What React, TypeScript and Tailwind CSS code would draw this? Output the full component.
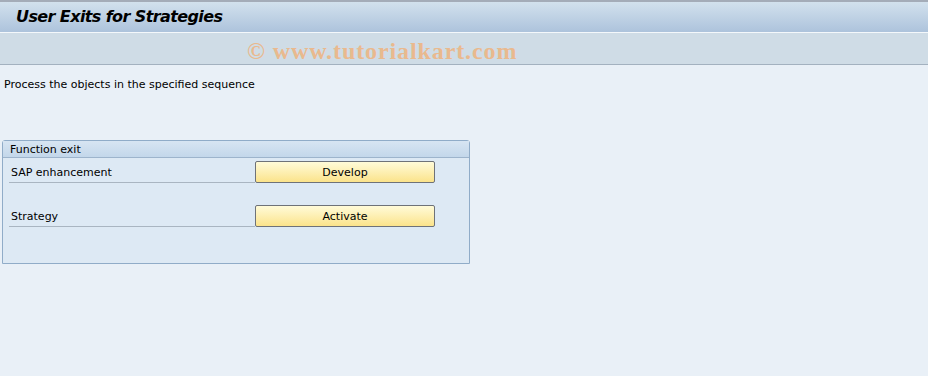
export default function App() {
  const font = { fontFamily: '"DejaVu Sans", sans-serif', fontSize: '11px' };
  return (
    <div className="w-[928px] h-[376px] overflow-hidden bg-[#e9f0f7] flex flex-col" style={font}>
      <div className="h-[2px] bg-[#a4acb8]" />
      <div className="h-[30px] bg-gradient-to-b from-[#d2e1ed] to-[#adc3dc] flex items-center pl-4">
        <span className="font-bold italic text-black tracking-[-0.6px]" style={{ fontSize: '16px' }}>
          User Exits for Strategies
        </span>
      </div>
      <div className="h-px bg-[#f4f8fb]" />
      <div className="h-[32px] bg-[#cfdce6] border-b border-[#a3b1bf] flex items-center pl-[247px] pt-[4px]">
        <span className="text-[24px] font-bold text-[#e9b98e] tracking-[0.9px] leading-none" style={{ fontFamily: '"Liberation Serif", serif' }}>
          © www.tutorialkart.com
        </span>
      </div>
      <div className="px-1 pt-[13px] text-black leading-[14px]">
        Process the objects in the specified sequence
      </div>
      <div className="ml-[2px] mt-[48px] w-[468px] h-[124px] border border-[#90acc8] rounded-t-[3px] bg-[#dde9f4] flex flex-col">
        <div className="h-[17px] bg-gradient-to-b from-[#d7e5f2] to-[#c3d7ea] border-b border-[#9db4cc] flex items-center pl-[7px] leading-none">
          Function exit
        </div>
        <div className="flex flex-col pl-[6px] pt-[3px] gap-[22px]">
          {['SAP enhancement', 'Strategy'].map((label, i) => (
            <div key={label} className="flex items-end h-[22px]">
              <div className="w-[246px] h-[21px] border-b border-[#a9b5c1] flex items-center pl-[2px] pt-[2px]">
                {label}
              </div>
              <button className="w-[180px] h-[22px] border border-[#6e7278] rounded-[2px] bg-gradient-to-b from-[#fffbd8] to-[#fbe38a] text-center leading-none">
                {i === 0 ? 'Develop' : 'Activate'}
              </button>
            </div>
          ))}
        </div>
      </div>
    </div>
  );
}
